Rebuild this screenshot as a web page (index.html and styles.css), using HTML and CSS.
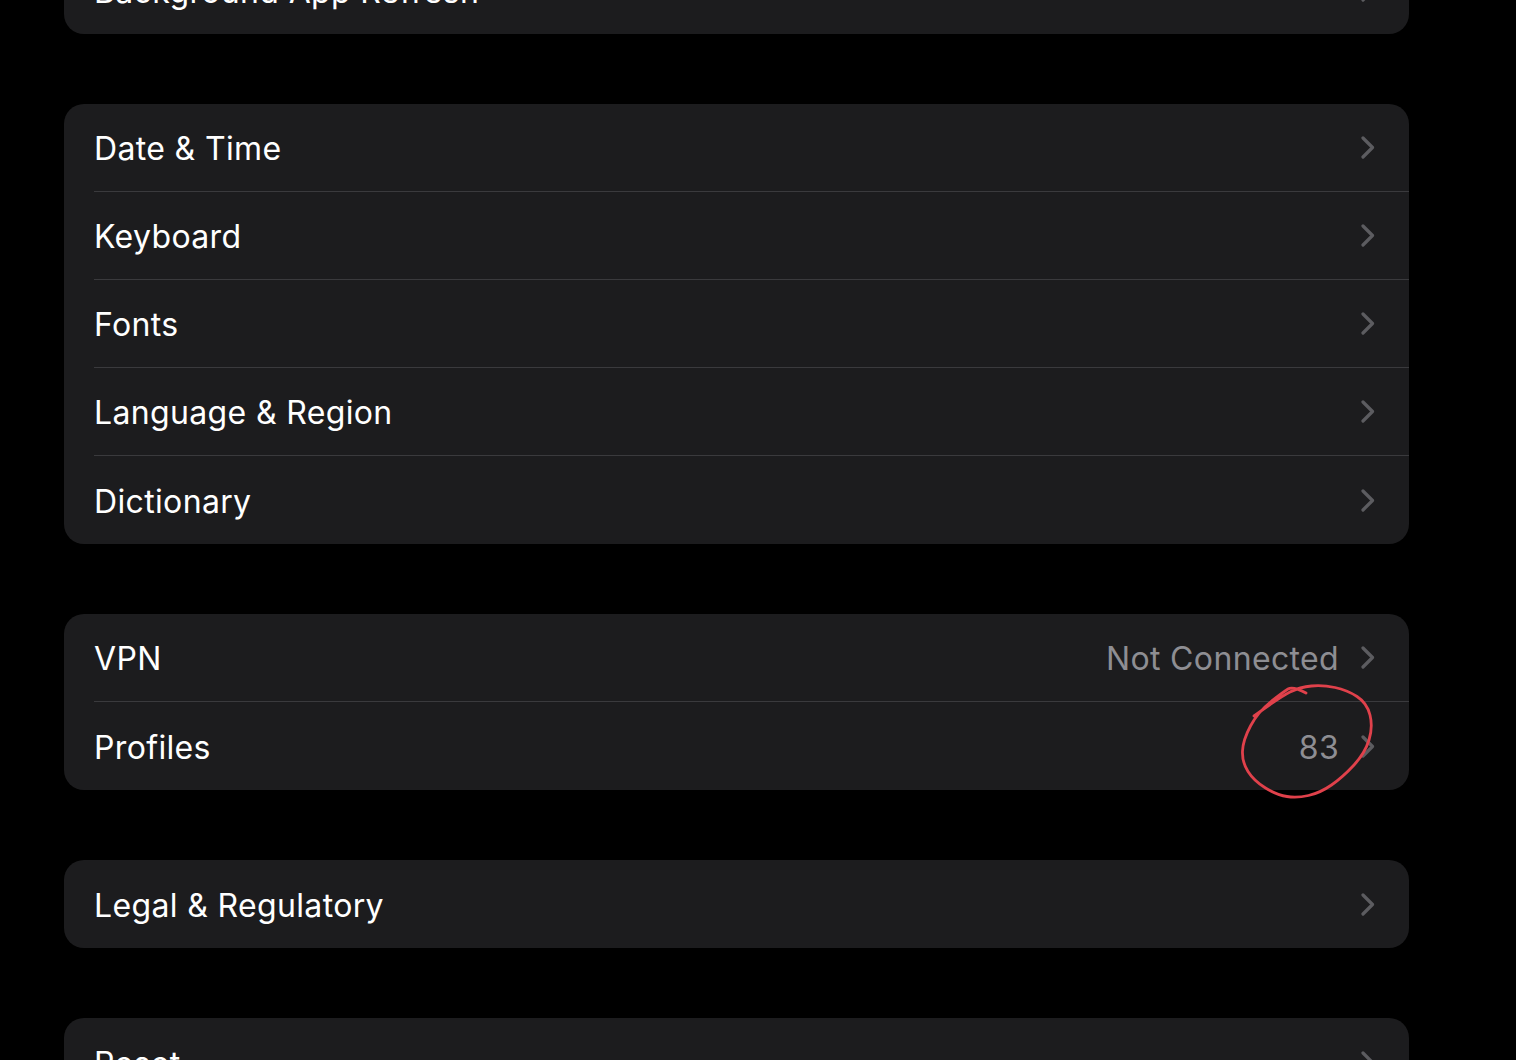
FILE: index.html
```html
<!DOCTYPE html>
<html lang="en">
<head>
<meta charset="utf-8">
<title>Settings</title>
<link rel="stylesheet" href="styles.css">
</head>
<body>
<div class="page">
  <div class="group">
    <div class="row"><div class="row-inner"><span class="label">Background App Refresh</span><svg class="chev" viewBox="0 0 14 23"><path d="M2 2 L11.5 11.5 L2 21"/></svg></div></div>
  </div>

  <div class="group">
    <div class="row"><div class="row-inner"><span class="label">Date &amp; Time</span><svg class="chev" viewBox="0 0 14 23"><path d="M2 2 L11.5 11.5 L2 21"/></svg></div></div>
    <div class="row"><div class="row-inner"><span class="label">Keyboard</span><svg class="chev" viewBox="0 0 14 23"><path d="M2 2 L11.5 11.5 L2 21"/></svg></div></div>
    <div class="row"><div class="row-inner"><span class="label">Fonts</span><svg class="chev" viewBox="0 0 14 23"><path d="M2 2 L11.5 11.5 L2 21"/></svg></div></div>
    <div class="row"><div class="row-inner"><span class="label">Language &amp; Region</span><svg class="chev" viewBox="0 0 14 23"><path d="M2 2 L11.5 11.5 L2 21"/></svg></div></div>
    <div class="row"><div class="row-inner"><span class="label">Dictionary</span><svg class="chev" viewBox="0 0 14 23"><path d="M2 2 L11.5 11.5 L2 21"/></svg></div></div>
  </div>

  <div class="group">
    <div class="row"><div class="row-inner"><span class="label">VPN</span><span class="value">Not Connected</span><svg class="chev" viewBox="0 0 14 23"><path d="M2 2 L11.5 11.5 L2 21"/></svg></div></div>
    <div class="row"><div class="row-inner"><span class="label">Profiles</span><span class="value">83</span><svg class="chev" viewBox="0 0 14 23"><path d="M2 2 L11.5 11.5 L2 21"/></svg></div></div>
  </div>

  <div class="group">
    <div class="row"><div class="row-inner"><span class="label">Legal &amp; Regulatory</span><svg class="chev" viewBox="0 0 14 23"><path d="M2 2 L11.5 11.5 L2 21"/></svg></div></div>
  </div>

  <div class="group">
    <div class="row"><div class="row-inner"><span class="label">Reset</span><svg class="chev" viewBox="0 0 14 23"><path d="M2 2 L11.5 11.5 L2 21"/></svg></div></div>
  </div>
</div>

<svg class="annotation" width="1516" height="1060" viewBox="0 0 1516 1060">
  <path d="M1306 693 Q1293 686 1288 689 Q1283 692 1270.5 702 Q1258 712 1250.5 726 Q1243 740 1242.5 751 Q1242 762 1248 771.5 Q1254 781 1265.5 788 Q1277 795 1287 796.5 Q1297 798 1308.5 795.5 Q1320 793 1331.5 785 Q1343 777 1354 765 Q1365 753 1369 740 Q1373 727 1370 715 Q1367 703 1357 696.5 Q1347 690 1335 687.5 Q1323 685 1311.5 686 Q1300 687 1290 692 Q1280 697 1254 716"/>
</svg>
</body>
</html>
```

FILE: styles.css
```css
html, body {
  margin: 0;
  padding: 0;
  background: #000;
  height: 100%;
  overflow: hidden;
}

body {
  font-family: Inter, "Noto Sans", "Liberation Sans", sans-serif;
  position: relative;
}

.page {
  display: flex;
  flex-direction: column;
  gap: 70px;
  margin-top: -54px;
  padding-left: 64px;
  width: 1345px;
}

.group {
  background: #1c1c1e;
  border-radius: 20px;
  overflow: hidden;
}

.row {
  padding-left: 30px;
  height: 88px;
}

.row-inner {
  height: 88px;
  box-sizing: border-box;
  display: flex;
  align-items: center;
  padding-right: 34px;
  border-bottom: 1px solid #3a3a3d;
}

.row:last-child .row-inner {
  border-bottom: none;
}

.label {
  flex: 1;
  color: #ffffff;
  font-size: 32px;
  letter-spacing: 0.35px;
  padding-top: 2px;
}

.value {
  color: #8e8e93;
  font-size: 32px;
  letter-spacing: 0.35px;
  padding-top: 2px;
  margin-right: 22px;
}

.chev {
  width: 14px;
  height: 23px;
  flex: none;
}

.chev path {
  fill: none;
  stroke: #5c5c60;
  stroke-width: 3.2;
  stroke-linecap: round;
  stroke-linejoin: round;
}

.annotation {
  position: absolute;
  left: 0;
  top: 0;
  pointer-events: none;
}

.annotation path {
  fill: none;
  stroke: #e0414b;
  stroke-width: 2.8;
  stroke-linecap: round;
  stroke-linejoin: round;
}
```
